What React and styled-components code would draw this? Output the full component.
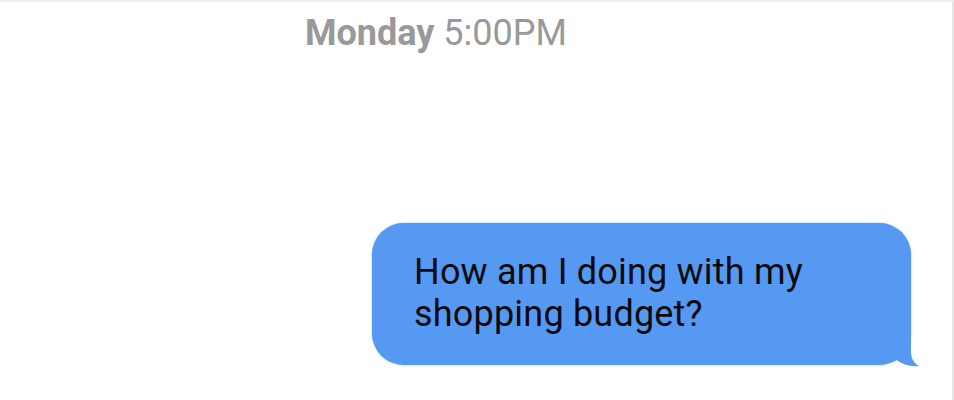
import React from "react";
import styled, { createGlobalStyle } from "styled-components";

const Global = createGlobalStyle`
  html, body { margin: 0; padding: 0; background: #ffffff; }
  body { font-family: Roboto, "Liberation Sans", sans-serif; }
`;

const Screen = styled.div`
  box-sizing: border-box;
  width: 954px;
  height: 400px;
  border-top: 2px solid #eaf2fb;
  border-right: 2px solid #e6e6e6;
  background: #ffffff;
  display: flex;
  flex-direction: column;
  overflow: hidden;
`;

const Stamp = styled.div`
  padding: 9px 0 0 305px;
  font-size: 36px;
  line-height: 44px;
  color: #999999;
  white-space: nowrap;
`;

const Day = styled.span`
  font-weight: 700;
`;

const Row = styled.div`
  display: flex;
  justify-content: flex-end;
  padding: 168px 41px 0 0;
`;

const Bubble = styled.div`
  position: relative;
  box-sizing: border-box;
  width: 539px;
  padding: 28px 40px 30px 42px;
  background: #5599f2;
  border-radius: 32px;
  box-shadow: 0 0 1.5px #5a9bf0;
  font-size: 36px;
  line-height: 42px;
  letter-spacing: 0.2px;
  color: #0a0a0a;
`;

const Tail = styled.svg`
  position: absolute;
  right: -8px;
  bottom: -2px;
  width: 36px;
  height: 30px;
  overflow: visible;
`;

export default function App() {
  return (
    <>
      <Global />
      <Screen>
        <Stamp>
          <Day>Monday</Day> 5:00PM
        </Stamp>
        <Row>
          <Bubble>
            How am I doing with my shopping budget?
            <Tail viewBox="0 0 36 30">
              <path
                d="M0 0 L28 0 L28 14 C28 22 31 26 36 29 C28 30 20 28 12 22 C8 25 4 26.5 0 27.5 Z"
                fill="#5599f2"
              />
            </Tail>
          </Bubble>
        </Row>
      </Screen>
    </>
  );
}
